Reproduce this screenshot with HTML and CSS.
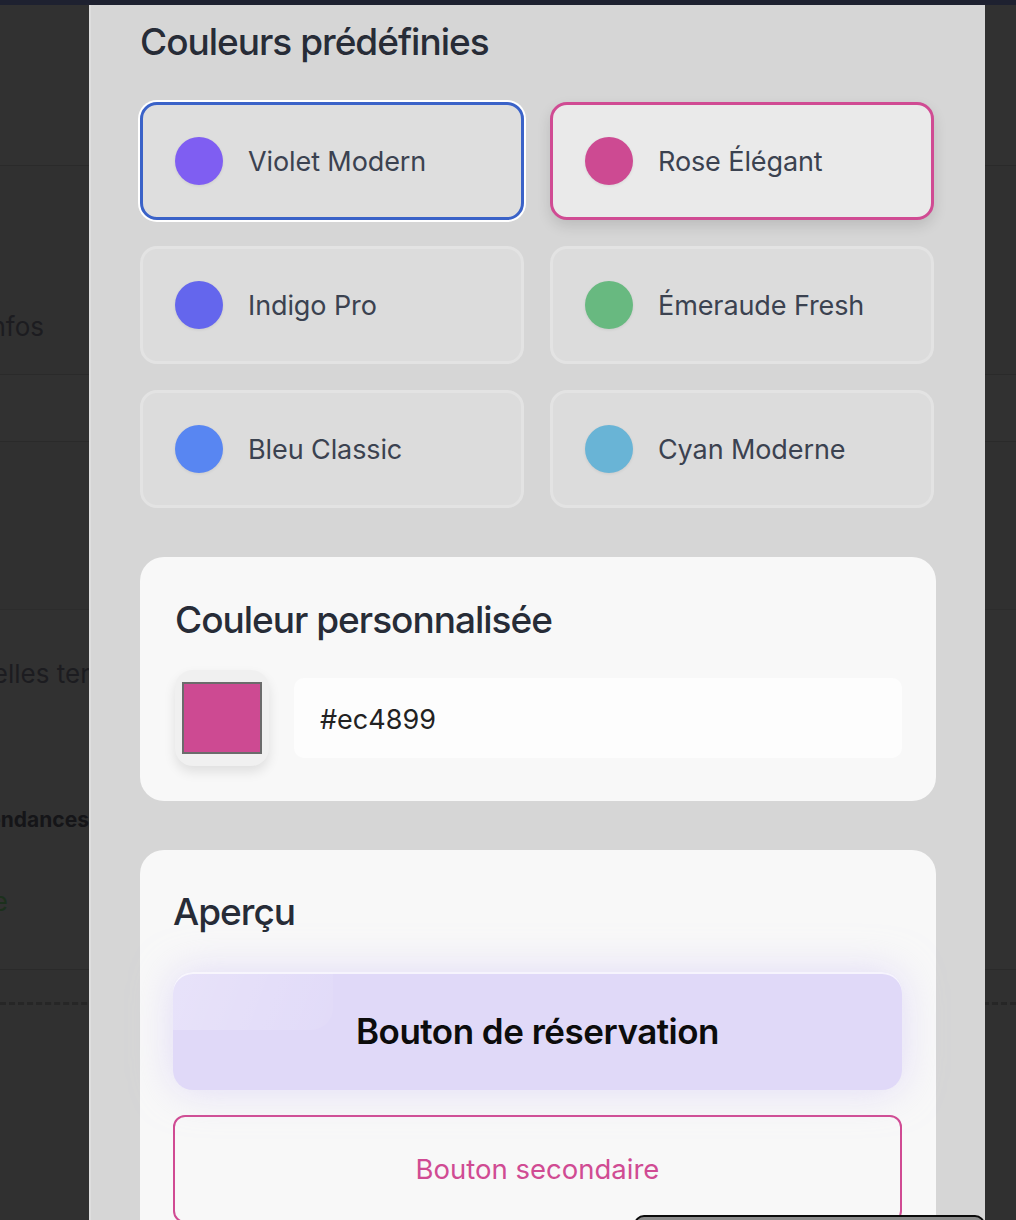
FILE: index.html
```html
<!DOCTYPE html>
<html lang="fr">
<head>
<meta charset="utf-8">
<title>Couleurs</title>
<link rel="stylesheet" href="styles.css">
</head>
<body>
<div class="topbar"></div>
<div class="page">
  <div class="row r1"></div>
  <div class="row r2"><span class="bgtext t-infos">Infos</span></div>
  <div class="row r3"></div>
  <div class="row r4"></div>
  <div class="row r5"><span class="bgtext t-elles">Nouvelles ter</span></div>
  <div class="row r6"><span class="bgtext t-tend">Tendances</span><span class="bgtext t-green">Active</span></div>
  <div class="row r7"></div>
</div>

<div class="modal">
  <h2 class="heading">Couleurs prédéfinies</h2>
  <div class="presets">
    <div class="preset sel-blue"><span class="dot" style="background:#7f5ef2"></span><span class="pname">Violet Modern</span></div>
    <div class="preset sel-pink"><span class="dot" style="background:#cd4a92"></span><span class="pname">Rose Élégant</span></div>
    <div class="preset"><span class="dot" style="background:#6466ed"></span><span class="pname">Indigo Pro</span></div>
    <div class="preset"><span class="dot" style="background:#68b980"></span><span class="pname">Émeraude Fresh</span></div>
    <div class="preset"><span class="dot" style="background:#5886f2"></span><span class="pname">Bleu Classic</span></div>
    <div class="preset"><span class="dot" style="background:#69b4d6"></span><span class="pname">Cyan Moderne</span></div>
  </div>

  <section class="card custom">
    <h3 class="card-title">Couleur personnalisée</h3>
    <div class="picker-row">
      <div class="swatch-btn"><span class="swatch"></span></div>
      <div class="hex-input">#ec4899</div>
    </div>
  </section>

  <section class="card preview">
    <h3 class="card-title">Aperçu</h3>
    <div class="btn-primary">Bouton de réservation</div>
    <div class="btn-secondary">Bouton secondaire</div>
  </section>
</div>

<div class="toast"></div>
</body>
</html>
```

FILE: styles.css
```css
* { box-sizing: border-box; }
html, body { margin: 0; padding: 0; }
body {
  width: 1016px;
  height: 1220px;
  overflow: hidden;
  background: #303030;
  font-family: Inter, "Noto Sans", sans-serif;
  position: relative;
}
.topbar { height: 5px; background: #1e2130; }

.page { display: flex; flex-direction: column; }
.row { position: relative; border-bottom: 1px solid #2a2a2a; }
.r1 { height: 161px; background: #313131; }
.r2 { height: 209px; background: #303030; }
.r3 { height: 67px; background: #313131; }
.r4 { height: 168px; background: #303030; border-bottom-color: #2c2c2c; }
.r5 { height: 360px; background: #313131; }
.r6 { height: 0; border: 0; }
.r7 { height: 35px; border-bottom: 3px dashed #262626; }

.bgtext { position: absolute; color: #1c1c20; white-space: nowrap; font-size: 26px; }
.t-infos { right: calc(100% - 44px); top: 145px; }
.t-elles { right: calc(100% - 90px); top: 48px; }
.t-tend { right: calc(100% - 89px); top: -163px; font-size: 21px; font-weight: 700; color: #151518; }
.t-green { right: calc(100% - 8px); top: -84px; color: #1c301c; }

.modal {
  position: absolute;
  left: 89px;
  top: 5px;
  width: 896px;
  height: 1215px;
  background: #d6d6d6;
  border-left: 2px solid #dedede;
  padding: 0 49px 0 49px;
  overflow: hidden;
}

.heading {
  margin: 14px 0 0 0;
  font-size: 37px;
  line-height: 46px;
  font-weight: 500;
  letter-spacing: -1px;
  color: #272c37;
}

.presets {
  margin-top: 37px;
  display: grid;
  grid-template-columns: 384px 384px;
  column-gap: 26px;
  row-gap: 26px;
}
.preset {
  height: 118px;
  border: 3px solid #e3e3e3;
  border-radius: 17px;
  background: #dcdcdc;
  display: flex;
  align-items: center;
  padding-left: 32px;
  gap: 25px;
}
.sel-blue {
  border-color: #3a62c8;
  background: #dedede;
  box-shadow: 0 0 0 2px #ffffff;
}
.sel-pink {
  border-color: #d04b93;
  background: #eaeaea;
  box-shadow: 0 6px 14px rgba(0,0,0,0.12);
}
.dot {
  width: 48px;
  height: 48px;
  border-radius: 50%;
  flex: none;
  box-shadow: 0 1px 3px rgba(0,0,0,0.08);
}
.pname {
  font-size: 27px;
  color: #3b4250;
  letter-spacing: -0.1px;
}

.card {
  background: #f8f8f8;
  border-radius: 24px;
  padding: 0 34px 0 35px;
}
.custom {
  margin-top: 49px;
  height: 244px;
  padding-top: 40px;
}
.card-title {
  margin: 0;
  font-size: 37px;
  line-height: 46px;
  font-weight: 500;
  letter-spacing: -1px;
  color: #272c37;
}
.picker-row {
  margin-top: 27px;
  display: flex;
  align-items: center;
  gap: 25px;
}
.swatch-btn {
  width: 94px;
  height: 96px;
  border-radius: 18px;
  background: #f0f0f0;
  box-shadow: 0 6px 12px rgba(0,0,0,0.1);
  padding: 12px 7px 12px 7px;
  flex: none;
  display: flex;
}
.swatch {
  width: 80px;
  height: 72px;
  background: #cd4a92;
  border: 2px solid #6b6b6b;
}
.hex-input {
  flex: 1;
  height: 80px;
  background: #fdfdfd;
  border-radius: 10px;
  display: flex;
  align-items: center;
  padding-left: 26px;
  padding-top: 3px;
  font-size: 27px;
  color: #222222;
}

.preview {
  margin-top: 49px;
  height: 420px;
  padding-top: 39px;
  padding-left: 33px;
}
.btn-primary {
  position: relative;
  margin-top: 37px;
  height: 118px;
  border-radius: 20px;
  background: #e0d9f8;
  box-shadow: 0 0 40px rgba(205,195,245,0.55), inset 0 2px 0 rgba(255,255,255,0.7);
  display: flex;
  align-items: center;
  justify-content: center;
  font-size: 35px;
  font-weight: 600;
  letter-spacing: -0.5px;
  color: #0c0c0c;
  overflow: hidden;
}
.btn-primary::before {
  content: "";
  position: absolute;
  left: 0;
  top: 0;
  width: 160px;
  height: 58px;
  border-radius: 20px 0 22px 0;
  background: linear-gradient(110deg, rgba(255,255,255,0.25), rgba(255,255,255,0.05));
}
.btn-secondary {
  margin-top: 25px;
  height: 108px;
  border: 2px solid #d04b93;
  border-radius: 12px;
  display: flex;
  align-items: center;
  justify-content: center;
  font-size: 27.5px;
  color: #d04b93;
}

.toast {
  position: absolute;
  left: 634px;
  top: 1215px;
  width: 351px;
  height: 40px;
  background: #8b8b8b;
  border: 2px solid #0a0a0a;
  border-radius: 10px;
}
```
